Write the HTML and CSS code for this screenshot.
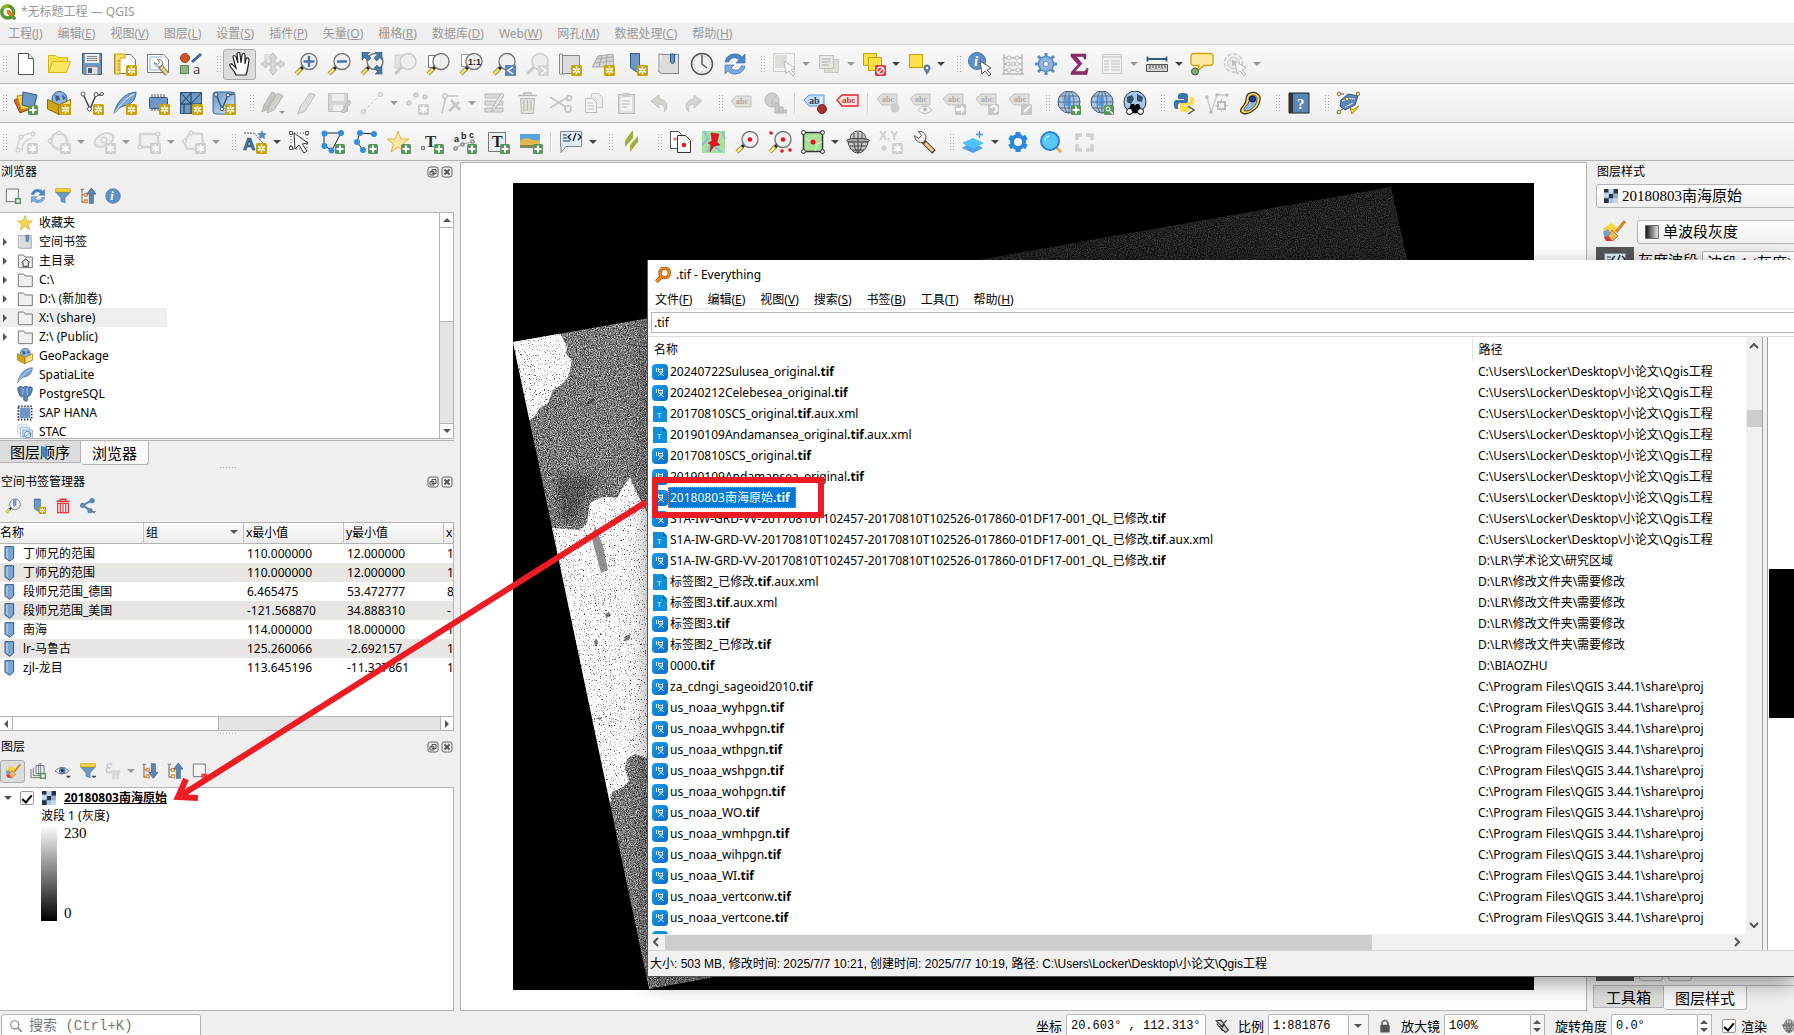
FILE: index.html
```html
<!DOCTYPE html>
<html lang="zh-CN">
<head>
  <meta charset="UTF-8" />
  <meta name="viewport" content="width=device-width, initial-scale=1.0"/>
  <title>*无标题工程 — QGIS</title>
  <link rel="stylesheet" href="styles.css">
</head>
<body>
  <!-- Icon sprite -->
  <svg class="sprite" aria-hidden="true">
    <!-- badges -->
    <symbol id="b-star" viewBox="0 0 24 24"><rect x="13" y="13" width="11" height="11" rx="1.5" fill="#c9a30a"/><path d="M18.5 14.5v8M15 16.5l7 4M22 16.5l-7 4" stroke="#fff" stroke-width="1.5"/><circle cx="18.5" cy="18.5" r="1" fill="#c9a30a"/></symbol>
    <symbol id="b-plus" viewBox="0 0 24 24"><rect x="14" y="14" width="10" height="10" rx="1.5" fill="#5a9560"/><path d="M19 15.5v7M15.500 19h7" stroke="#fff" stroke-width="2"/></symbol>
    <symbol id="b-gray" viewBox="0 0 24 24"><rect x="13" y="13" width="11" height="11" rx="1.5" fill="#cfcfcb"/><path d="M18.5 14.5v8M15 16.5l7 4M22 16.5l-7 4" stroke="#fff" stroke-width="1.5"/></symbol>
    <symbol id="mag" viewBox="0 0 24 24"><path d="M2 22l6-6" stroke="#777" stroke-width="4"/><path d="M2 22l6-6" stroke="#fce94f" stroke-width="2.5"/><path d="M7 17l3-3" stroke="#222" stroke-width="3"/><circle cx="15" cy="9.5" r="8" fill="#eee" fill-opacity=".9" stroke="#777" stroke-width="1.4"/></symbol>
    <symbol id="gmag" viewBox="0 0 24 24"><path d="M2 22l8-8" stroke="#c8c8c8" stroke-width="3"/><circle cx="15" cy="9.5" r="8" fill="#eee" stroke="#ccc" stroke-width="1.4"/></symbol>
    <symbol id="cursor" viewBox="0 0 24 24"><path d="M12 9l2 13 3-3 4 5 2-2-4-4 4-2z" fill="#fff" stroke="#555"/></symbol>
    <symbol id="gcursor" viewBox="0 0 24 24"><path d="M12 9l2 13 3-3 4 5 2-2-4-4 4-2z" fill="#f4f4f4" stroke="#bbb"/></symbol>
    <symbol id="gtag" viewBox="0 0 24 24"><path d="M1 8l5-5h15v11H6z" fill="#dededb" stroke="#c2c2be"/><text x="6" y="11" font-size="8" font-family="Liberation Serif" font-weight="bold" fill="#aaa">abc</text></symbol>

    <!-- row 1 -->
    <symbol id="qgis" viewBox="0 0 24 24"><circle cx="11.5" cy="12" r="9" fill="none" stroke="#589632" stroke-width="5"/><path d="M4 7a9 9 0 0 1 9-4" stroke="#93b023" stroke-width="5" fill="none"/><path d="M12 12l11 11" stroke="#589632" stroke-width="5"/><path d="M10 9h5l5 8-2 2-7-4z" fill="#ee7913"/></symbol>
    <symbol id="new" viewBox="0 0 24 24"><path d="M4.5 1.5h10l5 5v16h-15z" fill="#fff" stroke="#555"/><path d="M14.5 1.5v5h5" fill="#ddd" stroke="#555"/></symbol>
    <symbol id="open" viewBox="0 0 24 24"><path d="M1.5 20.5v-17h7l2 2h10v4" fill="#f7e14d" stroke="#d8b51c"/><path d="M1.5 20.5l4-11h18l-4 11z" fill="#fbe660" stroke="#d8b51c"/></symbol>
    <symbol id="save" viewBox="0 0 24 24"><path d="M2.5 1.5h19v21H4l-1.500-1.5z" fill="#6d97c4" stroke="#415a75"/><path d="M5 2h14v9H5z" fill="#eee"/><path d="M7 4.5h10M7 6.5h10M7 8.5h10" stroke="#888"/><path d="M6 14.5h12v8H6z" fill="#ddd" stroke="#888"/><path d="M8 16h4v5H8z" fill="#415a75"/></symbol>
    <symbol id="layout" viewBox="0 0 24 24"><path d="M1.5 2.5h16l5 5v14h-21z" fill="#fff" stroke="#777"/><path d="M2 2h10v4H7v16H2z" fill="#fce072" stroke="#c4a000"/><path d="M4 9h3M4 12h3M4 15h3M4 18h3" stroke="#c4a000"/><use href="#b-star"/></symbol>
    <symbol id="manager" viewBox="0 0 24 24"><path d="M1.5 2.5h16l5 5v13h-21z" fill="#fff" stroke="#777"/><path d="M4 5h12M4 5v13h12" stroke="#8ab4e0" fill="none"/><path d="M14 14l7 8" stroke="#777" stroke-width="5"/><path d="M15 15l6 7" stroke="#f0d080" stroke-width="3"/><path d="M14.5 14.5c-3 1-6-1-6-4l3 2 2-2-2-3c3-1 6 2 5 5z" fill="#eee" stroke="#777"/></symbol>
    <symbol id="style" viewBox="0 0 24 24"><circle cx="6" cy="6" r="4.5" fill="#d0532c" stroke="#a03a18"/><path d="M13 10l9-8" stroke="#3d6a98" stroke-width="3"/><rect x="1.5" y="13.5" width="8" height="8" fill="#8cb68a" stroke="#5a8a58"/><text x="14" y="22" font-size="13" font-family="Open Sans" fill="#333">a</text></symbol>
    <symbol id="hand" viewBox="0 0 24 24"><path d="M8 23c-1-4-4-6-6-9-1-2 1-3 3-1l3 3-3-11c0-2 2-2 3 0l2 6-1-9c0-2 3-2 3 0l1 9 1-8c0-2 3-2 3 0v9l1-5c1-2 3-1 3 1-1 6-1 10-3 15z" fill="#fff" stroke="#222" stroke-width="1.2"/></symbol>
    <symbol id="pan" viewBox="0 0 24 24"><path d="M12 1l4 5h-2v5h5V8l5 4-5 4v-3h-5v5h2l-4 5-4-5h2v-5H5v3l-5-4 5-4v3h5V6H8z" fill="#d8d8d8" stroke="#bbb"/><path d="M3 2h7v7H3z" fill="#d8d8d4" opacity=".7"/></symbol>
    <symbol id="zoomin" viewBox="0 0 24 24"><use href="#mag"/><path d="M15 4v11M9.500 9.5h11" stroke="#4a75a8" stroke-width="2.5"/></symbol>
    <symbol id="zoomout" viewBox="0 0 24 24"><use href="#mag"/><path d="M10 9.5h10" stroke="#4a75a8" stroke-width="2.5"/></symbol>
    <symbol id="zoomfull" viewBox="0 0 24 24"><use href="#mag"/><path d="M2 0h8L7.500 2.5 11 6 8 9 4.500 5.5 2 8zM22 0h-7l2.500 2.5L14 6l3 3 3-3.500L22 8zM22 22h-7l2.500-2.500L14 16l3-3 3 3 2-2z" fill="#4a78ab" stroke="#34597f" stroke-width=".6"/></symbol>
    <symbol id="zoomsel" viewBox="0 0 24 24"><path d="M2 3h13v13H2z" fill="#e2e2de" stroke="#d0d0cc"/><use href="#gmag"/></symbol>
    <symbol id="zoomlayer" viewBox="0 0 24 24"><path d="M2.5 3.5h12v12h-12z" fill="#fff" stroke="#777"/><use href="#mag"/></symbol>
    <symbol id="zoom11" viewBox="0 0 24 24"><path d="M2.5 2.5h12v12h-12z" fill="#fff" stroke="#999"/><use href="#mag"/><text x="9" y="13" font-size="9" font-weight="bold" font-family="Liberation Sans" fill="#222">1:1</text></symbol>
    <symbol id="zoomlast" viewBox="0 0 24 24"><use href="#mag"/><rect x="13" y="13" width="11" height="11" fill="#5b87b8"/><path d="M21 15l-5 3.5 5 3.5" fill="none" stroke="#fff" stroke-width="1.5"/></symbol>
    <symbol id="zoomnext" viewBox="0 0 24 24"><use href="#gmag"/><rect x="13" y="13" width="11" height="11" fill="#d4d4d4"/><path d="M16 15l5 3.5-5 3.5" fill="none" stroke="#fff" stroke-width="1.5"/></symbol>
    <symbol id="newmap" viewBox="0 0 24 24"><path d="M1.5 2h3v18l2 2h-5z" fill="#eee" stroke="#888"/><path d="M4.5 3.5h17v18h-17z" fill="#ddd" stroke="#888"/><use href="#b-star"/></symbol>
    <symbol id="new3d" viewBox="0 0 24 24"><path d="M1 15L7 4l15-2 1 13z" fill="#d4d4d4" stroke="#aaa"/><path d="M3 11l19-2M5 7l17-2M11 3L8 15M16 3l-1 12" stroke="#aaa" fill="none"/><use href="#b-star"/></symbol>
    <symbol id="newbm" viewBox="0 0 24 24"><path d="M6.5 1.5h9v20l-5-3-4-3z" fill="#6d97c4" stroke="#34597f"/><use href="#b-star"/></symbol>
    <symbol id="book" viewBox="0 0 24 24"><path d="M2 2h4v18H2z" fill="#eee" stroke="#888"/><path d="M5.5 2.5h16v19h-16c-2 0-3.500-1-3.500-3" fill="#dcdcdc" stroke="#888"/><path d="M13.5 2v8l2 2 2-2V2z" fill="#6d97c4" stroke="#34597f"/></symbol>
    <symbol id="clock" viewBox="0 0 24 24"><circle cx="12" cy="12" r="10.5" fill="#f2f2f2" stroke="#555" stroke-width="1.5"/><path d="M12 3v9l5 4" stroke="#555" stroke-width="1.5" fill="none"/><circle cx="12" cy="12" r="8" fill="none" stroke="#6d97c4" stroke-dasharray="1 3"/></symbol>
    <symbol id="refresh" viewBox="0 0 24 24"><path d="M2 10C3 2 14-1 19 5l3-3v9h-9l3-3c-4-4-9-2-10 2z" fill="#4d86c4" stroke="#3568a0" stroke-width=".6"/><path d="M22 14c-1 8-12 11-17 5l-3 3v-9h9l-3 3c4 4 9 2 10-2z" fill="#7cabe0" stroke="#3568a0" stroke-width=".6"/></symbol>
    <symbol id="select" viewBox="0 0 24 24"><rect x="1.5" y="1.5" width="21" height="18" fill="none" stroke="#bbb" stroke-dasharray="2 1"/><rect x="3" y="3" width="12" height="13" fill="#dcdcd8"/><use href="#gcursor"/></symbol>
    <symbol id="selform" viewBox="0 0 24 24"><path d="M7.5 7.5h14v13h-14z" fill="#dcdcd8" stroke="#c8c8c4"/><path d="M2.5 3.5h14v13h-14z" fill="#e8e8e4" stroke="#c0c0bc"/><path d="M5 7h9M5 10h9M5 13h7" stroke="#c0c0bc" stroke-width="1.5"/></symbol>
    <symbol id="deselect" viewBox="0 0 24 24"><path d="M1.5 1.5h13v12h-13z" fill="#fbe04a" stroke="#c4a000"/><path d="M6.5 5.5h13v13h-13z" fill="#fbe04a" stroke="#c4a000"/><rect x="13" y="13" width="11" height="11" rx="1.5" fill="#e6323c"/><circle cx="18.5" cy="18.5" r="3.5" fill="none" stroke="#fff" stroke-width="1.3"/><path d="M16 21l5-5" stroke="#fff" stroke-width="1.3"/></symbol>
    <symbol id="selloc" viewBox="0 0 24 24"><path d="M2.5 2.5h13v13h-13z" fill="#fbe04a" stroke="#c4a000"/><path d="M20 23c-2-4-3.500-5-3.500-7a3.500 3.500 0 0 1 7 0c0 2-1.500 3-3.500 7z" fill="#5b7fa8"/><circle cx="20" cy="16" r="1.2" fill="#fff"/></symbol>
    <symbol id="info" viewBox="0 0 24 24"><circle cx="9" cy="9" r="8.5" fill="#5e8fc7" stroke="#4a78ab"/><text x="6" y="14" font-size="15" font-style="italic" font-weight="bold" font-family="Liberation Serif" fill="#fff">i</text><use href="#cursor"/></symbol>
    <symbol id="abacus" viewBox="0 0 24 24"><path d="M3 2v19M21 2v19M1 22h22M3 6h18M3 12h18M3 18h18" stroke="#b4b4b4" stroke-width="1.3"/><g fill="#eee" stroke="#c0c0c0"><circle cx="8" cy="6" r="2"/><circle cx="16" cy="6" r="2"/><circle cx="7" cy="12" r="2"/><circle cx="12" cy="12" r="2"/><circle cx="16" cy="12" r="2"/><circle cx="8" cy="18" r="2"/><circle cx="17" cy="18" r="2"/></g></symbol>
    <symbol id="gear" viewBox="0 0 24 24"><path d="M12 1v22M1 12h22M4 4l16 16M20 4L4 20" stroke="#5b8cc2" stroke-width="3"/><circle cx="12" cy="12" r="7.5" fill="#8fb4de" stroke="#5b8cc2" stroke-width="1.5"/><circle cx="12" cy="12" r="2.5" fill="#fff" stroke="#5b8cc2"/></symbol>
    <symbol id="sigma" viewBox="0 0 24 24"><path d="M4 2h15v5h-1.500c-.5-2-1.500-2.500-3-2.500H9l6 7-7 8h8c2 0 3-1 3.500-3H21l-1 6H4v-2l7-8-7-8z" fill="#8e2b6e" stroke="#6a1c50" stroke-width=".5"/></symbol>
    <symbol id="table" viewBox="0 0 24 24"><path d="M2.5 2.5h19v19h-19z" fill="#f2f2f2" stroke="#c8c8c8"/><path d="M3 5h18M4 9h5M11 9h9M4 12h5M11 12h9M4 15h5M11 15h9M4 18h5M11 18h9" stroke="#d0d0d0" stroke-width="1.5"/></symbol>
    <symbol id="ruler" viewBox="0 0 24 24"><path d="M2.5 7h19M2.500 4.5v5M21.500 4.5v5" stroke="#34597f" stroke-width="1.8"/><path d="M1.5 12.5h21v7h-21z" fill="#ccc" stroke="#555"/><path d="M5 13v4M8 13v3M11 13v4M14 13v3M17 13v4M20 13v3" stroke="#555"/></symbol>
    <symbol id="bubble" viewBox="0 0 24 24"><path d="M4 1.500h16q3 0 3 3v6q0 3-3 3h-6l-7 6 2-6H4q-3 0-3-3v-6q0-3 3-3z" fill="#fdeaa0" stroke="#c9a30a" stroke-width="1.3"/><circle cx="5" cy="19.5" r="3.5" fill="#7fa87c" stroke="#555"/></symbol>
    <symbol id="action" viewBox="0 0 24 24"><circle cx="10.5" cy="11" r="9" fill="none" stroke="#d0d0d0" stroke-width="2" stroke-dasharray="4 2"/><circle cx="10.5" cy="11" r="6" fill="#e8e8e8" stroke="#ccc"/><path d="M9 8l5 3-5 3z" fill="#bbb"/><use href="#gcursor"/></symbol>

    <!-- row 2 -->
    <symbol id="source" viewBox="0 0 24 24"><path d="M0 9l10-4 6 13-10 4z" fill="#d9662b" stroke="#a04010"/><path d="M3 5l11-2 3 14-10 2z" fill="#fbd540" stroke="#b89000"/><path d="M9 1l14 3-3 13-12-3z" fill="#6d97c4" stroke="#34597f"/><use href="#b-plus"/></symbol>
    <symbol id="gpkg" viewBox="0 0 24 24"><circle cx="12.5" cy="8" r="7.5" fill="#8fb4de" stroke="#34597f"/><path d="M8 4l4 1 1 4-4 1zM15 3l4 4-3 2z" fill="#3b5f88"/><path d="M.5 8.500L12 14v9.500L.5 18z" fill="#d0a712" stroke="#8a6c00"/><path d="M23.5 8.500L12 14v9.500L23.500 18z" fill="#f7dc80" stroke="#8a6c00"/></symbol>
    <symbol id="newgpkg" viewBox="0 0 24 24"><use href="#gpkg"/><use href="#b-star"/></symbol>
    <symbol id="newshp" viewBox="0 0 24 24"><path d="M3 3l7 15 6-14h6" stroke="#444" stroke-width="1.5" fill="none"/><g fill="#fff" stroke="#555"><circle cx="3" cy="3" r="2"/><circle cx="9.5" cy="18" r="2"/><circle cx="16" cy="3.5" r="2"/><circle cx="22" cy="3" r="1.5"/></g><use href="#b-star"/></symbol>
    <symbol id="feather" viewBox="0 0 24 24"><path d="M1 23C3 12 11 2 23 1c0 8-5 13-13 14-3 1-5 3-9 8z" fill="#7ba6d4" stroke="#3a6696"/><path d="M1 23C6 15 13 7 21 3" stroke="#e4f0fa" fill="none"/></symbol>
    <symbol id="newspatia" viewBox="0 0 24 24"><use href="#feather"/><use href="#b-star"/></symbol>
    <symbol id="newmem" viewBox="0 0 24 24"><path d="M6 3v17M9 3v17M12 3v17M15 3v17M18 3v17" stroke="#555"/><rect x="3.5" y="6.5" width="18" height="11" rx="1" fill="#6d97c4" stroke="#34597f"/><use href="#b-star"/></symbol>
    <symbol id="newvirt" viewBox="0 0 24 24"><path d="M1.5 1.5h21v21h-21z" fill="#6d97c4" stroke="#2e4f74"/><path d="M12 2v20M2 13h20M2 2l10 11M12 2L2 13M22 2L12 13M5 13v9" stroke="#1f3b5c" fill="none"/><use href="#b-star"/></symbol>
    <symbol id="newmesh" viewBox="0 0 24 24"><rect x="1" y="1" width="22" height="22" rx="3" fill="url(#g-mesh)" stroke="#3a6696"/><path d="M4 3l6 15 6-14 6-1" stroke="#34597f" stroke-width="1.5" fill="none"/><g fill="#fff" stroke="#34597f"><circle cx="4" cy="3.5" r="1.8"/><circle cx="10" cy="18" r="1.8"/><circle cx="16" cy="4" r="1.8"/></g><use href="#b-star"/></symbol>
    <symbol id="pencils" viewBox="0 0 24 24"><path d="M1 21l2-7L11 1l4 2-8 15z" fill="#c4c4c0" stroke="#b4b4b0"/><path d="M6 22l2-7 9-13 5 3-9 14z" fill="#cfcfcb" stroke="#b4b4b0"/><path d="M18 20h6l-3 3z" fill="#999"/></symbol>
    <symbol id="pencil" viewBox="0 0 24 24"><path d="M4 23l2-7L16 2l5 2-10 16z" fill="#dededb" stroke="#bdbdba"/></symbol>
    <symbol id="gsave" viewBox="0 0 24 24"><path d="M1.5 2.5h19v18h-19z" fill="#d4d4d1" stroke="#c0c0bd"/><path d="M5 3h12v7H5zM6 14h10v6H6z" fill="#eee"/><path d="M14 21l8-12 2 2-7 11z" fill="#ccc" stroke="#bbb"/></symbol>
    <symbol id="gline" viewBox="0 0 24 24"><path d="M4 20L20 4" stroke="#c4c4c4" stroke-dasharray="3 2"/><circle cx="3.5" cy="20.5" r="2" fill="#eee" stroke="#bbb"/><circle cx="20.5" cy="3.5" r="2" fill="#eee" stroke="#bbb"/></symbol>
    <symbol id="gpoints" viewBox="0 0 24 24"><g fill="#ddd" stroke="#bbb"><circle cx="4" cy="12" r="2.2"/><circle cx="11" cy="4" r="2.2"/><circle cx="20" cy="6" r="2.2"/></g><use href="#b-gray"/></symbol>
    <symbol id="gvertex" viewBox="0 0 24 24"><path d="M4 22L8 5h12" stroke="#c4c4c4" stroke-width="1.5" fill="none"/><path d="M11 20l10-9M13 9l9 10" stroke="#c8c8c8" stroke-width="3" fill="none"/><circle cx="7" cy="5" r="2.5" fill="#eee" stroke="#bbb"/></symbol>
    <symbol id="gmulti" viewBox="0 0 24 24"><path d="M2 3h18v4H2zM2 10h18v4H2zM2 17h18v4H2z" fill="#dcdcd9" stroke="#b8b8b5"/><path d="M8 21l2-5L18 2l3 2-9 14z" fill="#e8e8e6" stroke="#b8b8b5"/></symbol>
    <symbol id="gtrash" viewBox="0 0 24 24"><path d="M2 4.500h19M8 4V2h7v2" stroke="#b8b8b5" stroke-width="1.5" fill="none"/><path d="M4.5 7.5h14l-1 15h-12z" fill="#e0e0dd" stroke="#b8b8b5"/><path d="M8 9v11M11.500 9v11M15 9v11" stroke="#b8b8b5"/></symbol>
    <symbol id="gcut" viewBox="0 0 24 24"><path d="M1 6l16 10M1 17L19 6" stroke="#c8c8c5" stroke-width="2"/><circle cx="19" cy="18" r="3" fill="none" stroke="#c0c0bd" stroke-width="1.5"/><circle cx="20" cy="7" r="2.5" fill="none" stroke="#c0c0bd" stroke-width="1.5"/></symbol>
    <symbol id="gcopy" viewBox="0 0 24 24"><path d="M9.5 2.5h7l4 4v10h-11z" fill="#eee" stroke="#ccc"/><path d="M3.5 7.5h7l4 4v10h-11z" fill="#f4f4f4" stroke="#bbb"/><path d="M5.5 12h5M5.500 15h7M5.500 18h7" stroke="#bbb"/></symbol>
    <symbol id="gpaste" viewBox="0 0 24 24"><path d="M3.5 3.5h16v19h-16z" fill="#dededb" stroke="#b8b8b5"/><path d="M6 6h11v14H6z" fill="#f4f4f4"/><path d="M8 2h7v4H8z" fill="#ccc"/><path d="M7 10h8M7 13h8M7 16h5" stroke="#bbb"/></symbol>
    <symbol id="gundo" viewBox="0 0 24 24"><path d="M3 10l8-6v4c7 0 11 8 5 13 2-5-1-8-5-8v4z" fill="#d4d4d1" stroke="#c4c4c1"/></symbol>
    <symbol id="gredo" viewBox="0 0 24 24"><path d="M21 10l-8-6v4C6 8 2 16 8 21c-2-5 1-8 5-8v4z" fill="#d4d4d1" stroke="#c4c4c1"/></symbol>
    <symbol id="glabel" viewBox="0 0 24 24"><use href="#gtag" y="2"/></symbol>
    <symbol id="gdiagram" viewBox="0 0 24 24"><circle cx="9" cy="9" r="7" fill="#cfcfcb" stroke="#b8b8b5"/><path d="M9 9l5-5M9 9v7" stroke="#b8b8b5"/><path d="M12 22V12h4v10zM16 22v-6h4v6zM20 22v-3h4v3z" fill="#c8c8c5" stroke="#b8b8b5"/></symbol>
    <symbol id="labpin" viewBox="0 0 24 24"><path d="M1 9l5-5h15v11H6z" fill="#bcdcf8" stroke="#5b9bd5"/><text x="6" y="13" font-size="10" font-family="Liberation Serif" font-weight="bold" fill="#345">ab</text><path d="M18 6v9" stroke="#fff" stroke-width="2"/><circle cx="19" cy="18" r="4.5" fill="#a83232" stroke="#842020"/></symbol>
    <symbol id="labred" viewBox="0 0 24 24"><path d="M1 9l5-5h16v11H6z" fill="#fde4e4" stroke="#e8202c" stroke-width="1.3"/><text x="6" y="12" font-size="9" font-family="Liberation Serif" font-weight="bold" fill="#c33">abc</text></symbol>
    <symbol id="glabpin" viewBox="0 0 24 24"><use href="#gtag"/><circle cx="19" cy="17" r="4.5" fill="#ccc"/></symbol>
    <symbol id="glabeye" viewBox="0 0 24 24"><use href="#gtag"/><path d="M9 19q7-8 14 0-7 7-14 0z" fill="#f4f4f4" stroke="#bbb"/><circle cx="16" cy="18.5" r="2" fill="#bbb"/></symbol>
    <symbol id="glabmove" viewBox="0 0 24 24"><use href="#gtag"/><rect x="13" y="13" width="11" height="11" rx="1" fill="#c8c8c4"/><path d="M14 17h5v-3l4 4.5-4 4.500v-3h-5z" fill="#fff"/></symbol>
    <symbol id="glabrot" viewBox="0 0 24 24"><use href="#gtag"/><rect x="13" y="13" width="11" height="11" rx="1" fill="#c8c8c4"/><path d="M16 17a3 3 0 1 1 3 4" stroke="#fff" stroke-width="1.8" fill="none"/></symbol>
    <symbol id="glabedit" viewBox="0 0 24 24"><use href="#gtag"/><rect x="13" y="13" width="11" height="11" rx="1" fill="#c8c8c4"/><path d="M16 21l6-6" stroke="#fff" stroke-width="2"/></symbol>
    <symbol id="globe" viewBox="0 0 24 24"><circle cx="12" cy="11" r="11" fill="#a4c4e6" stroke="#4c5a6a"/><g fill="none" stroke="#56667a" stroke-width=".9"><ellipse cx="12" cy="11" rx="5" ry="11"/><path d="M1 11h22M3 5h18M3 17h18M12 0v22"/></g><path d="M8 6h6v9H8z" fill="#3d86d8" opacity=".6"/></symbol>
    <symbol id="globeadd" viewBox="0 0 24 24"><use href="#globe"/><use href="#b-plus"/></symbol>
    <symbol id="globefind" viewBox="0 0 24 24"><use href="#globe"/><rect x="14" y="14" width="10" height="10" rx="1.5" fill="#5a9560"/><circle cx="18" cy="18" r="2" fill="none" stroke="#fff"/><path d="M20 20l3 3" stroke="#fff" stroke-width="1.5"/></symbol>
    <symbol id="globebin" viewBox="0 0 24 24"><circle cx="12" cy="11" r="11" fill="#a8c8e8" stroke="#333"/><path d="M4 6l5-2 2 4-3 5-4-2zM14 3l6 3-1 5-5-1z" fill="#2f4f74"/><path d="M4 22l4-9h3l1 2 1-2h3l4 9z" fill="#000"/><circle cx="6.5" cy="20.5" r="3" fill="#fff" stroke="#000"/><circle cx="17.5" cy="20.5" r="3" fill="#fff" stroke="#000"/></symbol>
    <symbol id="python" viewBox="0 0 24 24"><path d="M11 2c-4 0-5 1-5 3v3h6v1H4c-3 0-3 9 0 9h2v-3c0-2 1-3 3-3h5c2 0 2-1 2-2V5c0-2-1-3-5-3z" fill="#3f74a8"/><path d="M13 21c4 0 5-1 5-3v-3h-6v-1h8c3 0 3-8 0-8h-2v3c0 2-1 3-3 3h-5c-2 0-2 1-2 2v4c0 2 1 3 5 3z" fill="#fbdc4a"/><path d="M16 15l6 4-6 4" stroke="#555" fill="none" stroke-width="1.5"/></symbol>
    <symbol id="gproc" viewBox="0 0 24 24"><path d="M2 6l4 15L12 4h11" stroke="#ccc" stroke-width="1.5" fill="none"/><g fill="#bbb"><circle cx="2" cy="6" r="1.8"/><circle cx="6" cy="21" r="1.8"/><circle cx="12" cy="4" r="1.8"/><circle cx="22" cy="4" r="1.8"/></g><rect x="13" y="11" width="7" height="7" fill="#eee" stroke="#bbb" stroke-width="2"/><path d="M16.5 8v3M16.500 18v3M10 14.500h3M20 14.500h3" stroke="#bbb"/></symbol>
    <symbol id="swirl" viewBox="0 0 24 24"><path d="M10 3C16-1 23 3 22 9c-1 7-5 10-9 12-5 3-12 2-10-3 2-4 5-5 5-9 0-3 0-4 2-6z" fill="#fbe04a" stroke="#333" stroke-width="1.3"/><path d="M12 5c4-2 8 0 7 4-1 6-4 8-7 10-4 2-7 1-6-1 1-3 5-5 5-8 0-3 0-4 1-5z" fill="#8fb4de" stroke="#555"/><circle cx="14.5" cy="8" r="3" fill="#2040a0" stroke="#113"/></symbol>
    <symbol id="help" viewBox="0 0 24 24"><path d="M2 2h20v20H2z" fill="#5b87b8" stroke="#222"/><path d="M2 2h4v20H2z" fill="#333"/><text x="10" y="18" font-size="15" font-family="Liberation Serif" font-weight="bold" fill="#fff">?</text></symbol>
    <symbol id="polyedit" viewBox="0 0 24 24"><path d="M3 3h5M3 21l6-5M22 3l-3 4" stroke="#444" fill="none"/><path d="M5 9l7-6 10 2-3 9-10 5-5-4z" fill="#5b87b8" stroke="#34597f"/><path d="M6 10q7-4 13-2M17 12l-8 4" stroke="#dde6f0" fill="none"/><g fill="#fbe04a" stroke="#777"><circle cx="3" cy="3" r="1.8"/><circle cx="3" cy="21" r="1.8"/><circle cx="11" cy="8" r="1.8"/><circle cx="22" cy="3" r="1.8"/></g><path d="M14 17l2 6 7-8-6 4z" fill="#fbe04a" stroke="#a80"/></symbol>

    <!-- row 3 -->
    <symbol id="garc" viewBox="0 0 24 24"><path d="M3 20C3 10 8 3 20 3M8 20c0-6 3-10 10-12" stroke="#d4d4d4" stroke-width="1.5" fill="none"/><g fill="#eee" stroke="#c8c8c8"><circle cx="4" cy="20" r="2"/><circle cx="7" cy="7" r="2"/><circle cx="19" cy="4" r="2"/></g><use href="#b-gray"/></symbol>
    <symbol id="gcircle" viewBox="0 0 24 24"><circle cx="12" cy="11" r="8" fill="#f0f0ee" stroke="#d4d4d4" stroke-width="2.5"/><g fill="#eee" stroke="#c8c8c8"><circle cx="12" cy="3" r="2"/><circle cx="3" cy="11" r="2"/></g><use href="#b-gray"/></symbol>
    <symbol id="gellipse" viewBox="0 0 24 24"><ellipse cx="12" cy="10" rx="10" ry="6" transform="rotate(-25 12 10)" fill="#f0f0ee" stroke="#d4d4d4" stroke-width="2"/><circle cx="12" cy="10" r="3" fill="#eee" stroke="#c8c8c8"/><use href="#b-gray"/></symbol>
    <symbol id="grect" viewBox="0 0 24 24"><path d="M3 4h18v13H3z" fill="#f0f0ee" stroke="#d4d4d4" stroke-width="2.5"/><g fill="#eee" stroke="#c8c8c8"><circle cx="3" cy="17" r="2"/><circle cx="21" cy="4" r="2"/></g><use href="#b-gray"/></symbol>
    <symbol id="gpoly" viewBox="0 0 24 24"><path d="M2 12L8 3l12 1 1 9-8 6H5z" fill="#f0f0ee" stroke="#d4d4d4" stroke-width="2.2"/><g fill="#eee" stroke="#c8c8c8"><circle cx="2.5" cy="11" r="2"/><circle cx="9" cy="3" r="2"/></g><use href="#b-gray"/></symbol>
    <symbol id="annot" viewBox="0 0 24 24"><path d="M1 3h10l9 10" stroke="#555" stroke-dasharray="2 1" fill="none"/><path d="M19 0l1.500 3 3.500.5-2.500 2 .5 3.500-3-1.500-3 1.500.5-3.500-2.500-2 3.500-.5z" fill="#5b87b8"/><text x="0" y="20" font-size="17" font-weight="bold" font-family="Liberation Sans" fill="#4a78ab" stroke="#27425f" stroke-width=".7">A</text><use href="#b-star"/></symbol>
    <symbol id="annsel" viewBox="0 0 24 24"><path d="M3 3h16v16H3z" fill="none" stroke="#444" stroke-dasharray="1 2"/><path d="M1.5 1.5h3v3h-3zM17.500 1.5h3v3h-3zM1.500 16.5h3v3h-3z" fill="#fff" stroke="#555"/><path d="M6 3l1 16 4-4 5 8 3-2-5-7 6-1z" fill="#fff" stroke="#333"/></symbol>
    <symbol id="annpoly" viewBox="0 0 24 24"><path d="M3 3h17L11 20 3 16z" fill="#eee" stroke="#222"/><g fill="#338ce0"><circle cx="3.5" cy="3.5" r="3"/><circle cx="20" cy="3" r="3"/><circle cx="3.5" cy="16" r="3"/><circle cx="10.5" cy="20.5" r="3"/></g><use href="#b-plus"/></symbol>
    <symbol id="annline" viewBox="0 0 24 24"><path d="M20 4L6 3 3 12l6 8" fill="none" stroke="#222"/><g fill="#338ce0"><circle cx="6" cy="3" r="3"/><circle cx="20" cy="4" r="3"/><circle cx="3" cy="12" r="3"/><circle cx="9" cy="20" r="3"/></g><use href="#b-plus"/></symbol>
    <symbol id="star" viewBox="0 0 24 24"><path d="M12 1l3 8h8l-6.500 5 2.500 8-7-5-7 5 2.500-8L1 9h8z" fill="#fbd94a" stroke="#c69a14"/></symbol>
    <symbol id="annstar" viewBox="0 0 24 24"><path d="M11 1l3 8h8l-6.500 5 2.500 8-7-5-7 5 2.500-8L0 9h8z" fill="#fde6a0" stroke="#e0b040"/><use href="#b-plus"/></symbol>
    <symbol id="anntext" viewBox="0 0 24 24"><text x="5" y="17" font-size="17" font-weight="bold" font-family="Liberation Serif" fill="#333">T</text><path d="M1.5 16.5h3v3h-3z" fill="#ccc" stroke="#777"/><use href="#b-plus"/></symbol>
    <symbol id="anncurve" viewBox="0 0 24 24"><path d="M2 19L8 15l6-2 8-1" stroke="#999" fill="none"/><text x="1" y="12" font-size="9" font-weight="bold" font-family="Liberation Sans" fill="#222">a</text><text x="8" y="9" font-size="9" font-weight="bold" font-family="Liberation Sans" fill="#222">b</text><text x="16" y="8" font-size="9" font-weight="bold" font-family="Liberation Sans" fill="#222">c</text><path d="M1 17h3v3H1zM8 13h3v3H8zM18 10h3v3h-3z" fill="#ddd" stroke="#777"/><use href="#b-plus"/></symbol>
    <symbol id="annbox" viewBox="0 0 24 24"><path d="M2.5 2.5h17v19h-17z" fill="#e8eef0" stroke="#777"/><text x="6" y="17" font-size="16" font-weight="bold" font-family="Liberation Serif" fill="#222">T</text><use href="#b-plus"/></symbol>
    <symbol id="annpic" viewBox="0 0 24 24"><path d="M1 4h20v14H1z" fill="#5aa5e0"/><path d="M1 11q5-5 10-2 5 2 10 1v8H1z" fill="#e0b850"/><path d="M1 15h20v3H1z" fill="#7c8c50"/><use href="#b-plus"/></symbol>
    <symbol id="anncode" viewBox="0 0 24 24"><path d="M1.5 1.5h21v15H7l-5 6v-6h-.5z" fill="#e0ecf4" stroke="#888"/><path d="M4 5h4M4 8h4M4 11h7" stroke="#4a78ab" stroke-width="1.5"/><path d="M12 4L9 7l3 3M19 4l3 3-3 3M17 3l-3 8" stroke="#222" stroke-width="1.3" fill="none"/></symbol>
    <symbol id="slashes" viewBox="0 0 24 24"><path d="M12 1L5 11v6l8-9V1zM18 6l-8 9v7l8-10z" fill="#a3ae36"/></symbol>
    <symbol id="pages" viewBox="0 0 24 24"><path d="M1.5 1.5h8l3 3v14h-11z" fill="#fff" stroke="#555"/><path d="M8.5 5.5h8l5 5v12h-13z" fill="#fff" stroke="#333"/><circle cx="6" cy="9" r="1.8" fill="#f08080"/><circle cx="15" cy="15" r="2.2" fill="#f0101c"/></symbol>
    <symbol id="pinmap" viewBox="0 0 24 24"><path d="M0 1h23v22H0z" fill="#a8e0a0"/><path d="M2 1l4 8-6 6M20 1l3 8M5 22l5-8 9 8" stroke="#88b8e8" stroke-width="2" fill="none"/><path d="M9 3l8 1-2 8 3 3-6 1-4 6 1-7-3-2 4-2z" fill="#f0101c" stroke="#a00c14" stroke-width=".5"/></symbol>
    <symbol id="magdot" viewBox="0 0 24 24"><use href="#mag"/><circle cx="15" cy="9.5" r="2.3" fill="#f0101c"/></symbol>
    <symbol id="magdots" viewBox="0 0 24 24"><use href="#mag"/><g fill="#f0101c"><circle cx="15" cy="9.5" r="2.3"/><circle cx="3" cy="3" r="1.8"/><circle cx="14" cy="21" r="1.8"/><circle cx="22" cy="20" r="1.8"/></g></symbol>
    <symbol id="bbox" viewBox="0 0 24 24"><path d="M2.5 2.5h19v19h-19z" fill="#a8e098" stroke="#333" stroke-width="1.5"/><path d="M4 8l6 4 4-8M14 21l2-7 5-2" stroke="#d4f0cc" fill="none"/><circle cx="12" cy="12" r="2.5" fill="#f0101c"/><g fill="#fff" stroke="#333"><circle cx="2.5" cy="2.5" r="2"/><circle cx="21.5" cy="2.5" r="2"/><circle cx="2.5" cy="21.5" r="2"/><circle cx="21.5" cy="21.5" r="2"/></g></symbol>
    <symbol id="dome" viewBox="0 0 24 24"><path d="M4 9a8 8 0 0 1 16 0z" fill="#ccc" stroke="#555"/><ellipse cx="12" cy="10.5" rx="11.5" ry="2" fill="#aaa" stroke="#444"/><path d="M2 12c1 6 5 11 10 11s9-5 10-11z" fill="#c4c4c4" stroke="#444"/><path d="M8 12c0 5 2 9 4 11 2-2 4-6 4-11M12 2v21M4 16h16M8 3v6M16 3v6M6 20h12" stroke="#444" fill="none"/></symbol>
    <symbol id="gxy" viewBox="0 0 24 24"><text x="0" y="10" font-size="12" font-weight="bold" font-family="Liberation Sans" fill="#d0d0d0">X,Y</text><circle cx="5" cy="18" r="2.5" fill="#ccc"/><use href="#b-gray"/></symbol>
    <symbol id="wrench" viewBox="0 0 24 24"><path d="M11 11l11 11" stroke="#444" stroke-width="5"/><path d="M13 13l8 8" stroke="#f3cf80" stroke-width="3"/><path d="M11.5 12.5c-4 1-9-2-9-7l4 3 3-3-3-4c5-1 9 4 7 8z" fill="#eee" stroke="#555"/></symbol>
    <symbol id="layerplus" viewBox="0 0 24 24"><path d="M1 18l5-3 6 3 5-3 5 3-10 5z" fill="#4da0ea"/><path d="M12 8l11 5-11 6-11-6z" fill="#4cc4f2"/><path d="M18.5 1v7M15 4.500h7" stroke="#4a90e0" stroke-width="1.5"/></symbol>
    <symbol id="bluegear" viewBox="0 0 24 24"><path d="M12 2v20M3.500 7l17 10M20.500 7l-17 10" stroke="#2b88dd" stroke-width="5"/><circle cx="12" cy="12" r="6" fill="none" stroke="#2b88dd" stroke-width="4"/><circle cx="12" cy="12" r="4" fill="#f6f6f6"/></symbol>
    <symbol id="bluemag" viewBox="0 0 24 24"><path d="M17 17l5 5" stroke="#f0a050" stroke-width="2.5"/><circle cx="11" cy="11" r="9" fill="#58c8f8" stroke="#2b80d0" stroke-width="2"/><path d="M6 11a5 5 0 0 1 4-5" stroke="#fff" fill="none"/></symbol>
    <symbol id="gfocus" viewBox="0 0 24 24"><path d="M5 10V5h5M14 5h6v5M20 14v6h-6M10 20H5v-6" fill="none" stroke="#d0d0d0" stroke-width="3.5"/></symbol>

    <!-- panels -->
    <symbol id="p-add" viewBox="0 0 24 24"><path d="M2 1.500h18v19H2z" fill="#f4f4f4" stroke="#777" stroke-width="1.5"/><rect x="16" y="16" width="7" height="7" fill="#fff" stroke="#5a9560" stroke-width="2.5"/></symbol>
    <symbol id="p-remove" viewBox="0 0 24 24"><path d="M2 1.500h18v19H2z" fill="#f4f4f4" stroke="#777" stroke-width="1.5"/><rect x="14" y="16" width="9" height="6" fill="#e84040"/></symbol>
    <symbol id="p-filter" viewBox="0 0 24 24"><path d="M1 6h22l-8 9v7l-6-2v-5z" fill="#6d97c4" stroke="#4a78ab"/><path d="M1 1h22v5H1z" fill="#fbd540" stroke="#c4a000"/></symbol>
    <symbol id="p-filterdd" viewBox="0 0 24 24"><use href="#p-filter"/><path d="M17 19h8l-4 4z" fill="#444"/></symbol>
    <symbol id="p-collapse" viewBox="0 0 24 24"><path d="M1 2h5M3 2v19h6M3 10h6" stroke="#888" stroke-width="2" fill="none"/><path d="M7 8h4v4H7zM7 18h4v4H7z" fill="#fff" stroke="#f09030" stroke-width="2"/><path d="M17 0l7 9h-4v14h-6V9h-4z" fill="#5b87b8" stroke="#34597f"/></symbol>
    <symbol id="p-expand" viewBox="0 0 24 24"><path d="M1 2h5M3 2v19h6M3 10h6" stroke="#888" stroke-width="2" fill="none"/><path d="M7 8h4v4H7zM7 18h4v4H7z" fill="#fff" stroke="#f09030" stroke-width="2"/><path d="M17 23l7-9h-4V1h-6v13h-4z" fill="#5b87b8" stroke="#34597f"/></symbol>
    <symbol id="p-info" viewBox="0 0 24 24"><circle cx="12" cy="12" r="11" fill="#5e8fc7" stroke="#4a78ab"/><text x="8" y="18" font-size="18" font-style="italic" font-weight="bold" font-family="Liberation Serif" fill="#fff">i</text></symbol>
    <symbol id="folder" viewBox="0 0 24 24"><path d="M2 22V3h8l2 3h11v16z" fill="#efefef" stroke="#7a7a7a" stroke-width="1.5"/></symbol>
    <symbol id="home" viewBox="0 0 24 24"><use href="#folder"/><path d="M7 14l6-5 6 5M9 14v6h8v-6" fill="none" stroke="#333" stroke-width="1.5"/></symbol>
    <symbol id="elephant" viewBox="0 0 24 24"><path d="M1 4c0-4 7-4 8-2 3-2 6-2 8 0 4-2 7 0 6 4s-3 8-4 9c-2 1-2 0-3 0 0 4 0 8-2 8s-4-1-4-3v-6c-3 4-6 2-6 0C3 11 1 8 1 4z" fill="#5b87b8" stroke="#2e4f74"/><path d="M8 3c2 3 1 8 0 10M16 3c-2 3-1 7 0 11" stroke="#cfe0f0" fill="none"/></symbol>
    <symbol id="hana" viewBox="0 0 24 24"><rect x="2" y="2" width="20" height="20" fill="none" stroke="#222" stroke-width="2.5" stroke-dasharray="2 2.5"/><rect x="4" y="4" width="16" height="16" fill="#6d97c4"/></symbol>
    <symbol id="stac" viewBox="0 0 24 24"><path d="M1 1h14v14H1z" fill="#eef4fa" stroke="#b8cce0"/><path d="M5 5h14v14H5z" fill="#dce8f4" stroke="#8aaccc"/><path d="M9 9h14v14H9z" fill="#e8f0f8" stroke="#5b87b8"/><circle cx="16" cy="16" r="5" fill="none" stroke="#5b87b8" stroke-width="1.5"/><path d="M12 19l8-6" stroke="#5b87b8"/></symbol>
    <symbol id="bm" viewBox="0 0 24 24"><path d="M6 1h13v17l-6 5-7-5z" fill="#7ba6d4" stroke="#34597f" stroke-width="1.5"/><path d="M9 3v15" stroke="#b8d0ea" stroke-width="2"/></symbol>
    <symbol id="bmzoom" viewBox="0 0 24 24"><use href="#mag"/><path d="M12 2h5v9l-2.500 2L12 11z" fill="#6d97c4"/></symbol>
    <symbol id="trash" viewBox="0 0 24 24"><path d="M2 5h20M8 5V2h8v3" stroke="#f0303c" stroke-width="2.2" fill="none"/><path d="M4 8h16v14H4z" fill="#fff" stroke="#f0303c" stroke-width="2"/><path d="M8 9v12M12 9v12M16 9v12" stroke="#f0303c" stroke-width="1.8"/></symbol>
    <symbol id="share" viewBox="0 0 24 24"><path d="M17 4L4 11l12 8" stroke="#5b87b8" stroke-width="3" fill="none"/><g fill="#5b87b8"><circle cx="18" cy="4" r="4"/><circle cx="4" cy="11" r="4"/><circle cx="15" cy="19" r="4"/></g><path d="M17 20h7l-3 3z" fill="#555"/></symbol>
    <symbol id="brush" viewBox="0 0 24 24"><path d="M1 10l8-6 6 4-3 10-9 2z" fill="#fbd540"/><path d="M1 13l5-3 4 8-7 2z" fill="#6d9fd8"/><path d="M2 18l5-1 5 5H4z" fill="#e8303c"/><path d="M10 11l6 6-6 5-4-5z" fill="#f0b860" stroke="#b07820"/><path d="M14 13L23 2" stroke="#d08828" stroke-width="3"/></symbol>
    <symbol id="group" viewBox="0 0 24 24"><path d="M1.5 9v13H16M5 7v12h14M9 4h12v12H9z" fill="none" stroke="#777" stroke-width="1.5"/><path d="M13 18V2l3-2v18" stroke="#456" fill="none"/><rect x="16" y="16" width="7" height="7" fill="#fff" stroke="#5a9560" stroke-width="2.5"/></symbol>
    <symbol id="eye" viewBox="0 0 24 24"><path d="M0 12Q11 1 21 12 11 21 0 12z" fill="#f4f4f4" stroke="#777" stroke-width="1.5"/><circle cx="11" cy="11.5" r="5" fill="#5b87b8"/><circle cx="11" cy="11.5" r="2" fill="#222"/><path d="M16 19h8l-4 4z" fill="#444"/></symbol>
    <symbol id="geps" viewBox="0 0 24 24"><path d="M11 3C7-1 1 2 4 6c1 2 4 1 4 1S2 7 2 11c0 5 7 4 9 1" stroke="#c4c4c4" stroke-width="2" fill="none"/><path d="M10 11h13v4l-2 3v6h-4v-6h-2v6h-4v-8z" fill="#d8d8d8"/></symbol>
    <symbol id="raster" viewBox="0 0 24 24"><path d="M0 0h24v24H0z" fill="#a9c6e4"/><path d="M0 0h8v6H0zM16 0h8v8h-8zM8 8h8v8H8zM0 16h8v8H0z" fill="#2c3440"/><path d="M8 0h8v8H8zM0 8h8v6H0zM16 16h8v8h-8z" fill="#c4d9ee"/><path d="M16 8h8v8h-8z" fill="#92b2d4"/></symbol>
    <symbol id="ramp" viewBox="0 0 24 24"><path d="M1 1h22v22H1z" fill="url(#g-gray)" stroke="#555" stroke-width="1.5"/></symbol>
    <symbol id="float" viewBox="0 0 24 24"><rect x="2" y="2" width="20" height="20" rx="4" fill="none" stroke="#666" stroke-width="2"/><path d="M10 7h8v8h-8zM6 11h8v7H6z" fill="#efefef" stroke="#555" stroke-width="2"/></symbol>
    <symbol id="close" viewBox="0 0 24 24"><rect x="2" y="2" width="20" height="20" rx="4" fill="none" stroke="#666" stroke-width="2"/><path d="M7 7l10 10M17 7L7 17" stroke="#555" stroke-width="4"/></symbol>
    <symbol id="search" viewBox="0 0 24 24"><circle cx="10" cy="10" r="7" fill="none" stroke="#888" stroke-width="2"/><path d="M15 15l7 7" stroke="#888" stroke-width="3"/></symbol>
    <symbol id="evt" viewBox="0 0 24 24"><path d="M10 14l-8 8" stroke="#9c4a08" stroke-width="6"/><circle cx="14.5" cy="9" r="7" fill="none" stroke="#9c4a08" stroke-width="5"/><path d="M10 14l-7.500 7.500" stroke="#f88c1c" stroke-width="4"/><circle cx="14.5" cy="9" r="7" fill="none" stroke="#f88c1c" stroke-width="3"/></symbol>
    <symbol id="f-tif" viewBox="0 0 16 16"><rect width="16" height="16" rx="4" fill="url(#g-blue)"/><path d="M4.5 4v4M6.500 4v4M7 5.500h4M10.500 4v4M7 8h4M6 12l5-4M7 8l5 4" stroke="#e4f2fc" fill="none" stroke-width=".9"/></symbol>
    <symbol id="f-xml" viewBox="0 0 16 16"><path d="M1 0h10l4 4v12H1z" fill="#0e8fdc"/><path d="M11 0l4 4h-4z" fill="#0868b8"/><text x="5" y="12" font-size="8" font-family="Open Sans" fill="#fff">T</text></symbol>
    <symbol id="satellite" viewBox="0 0 24 24"><path d="M2 3l8-1 6 7-3 5zM8 14l8-4 7 9-5 4zM3 8l10 12M20 2l-7 8" fill="#ccc" stroke="#333" stroke-width="1.8"/></symbol>
    <symbol id="lock" viewBox="0 0 24 24"><path d="M7 11V6q5-7 10 0v5" fill="none" stroke="#777" stroke-width="3"/><rect x="4" y="10" width="16" height="13" rx="1" fill="#555"/></symbol>
  </svg>

  <header class="titlebar"><svg class="i16"><use href="#qgis"/></svg><span>*无标题工程 — QGIS</span></header>
  <nav class="menubar">
    <a href="#">工程(<u>J</u>)</a><a href="#">编辑(<u>E</u>)</a><a href="#">视图(<u>V</u>)</a><a href="#">图层(<u>L</u>)</a><a href="#">设置(<u>S</u>)</a><a href="#">插件(<u>P</u>)</a><a href="#">矢量(<u>O</u>)</a><a href="#">栅格(<u>R</u>)</a><a href="#">数据库(<u>D</u>)</a><a href="#">Web(<u>W</u>)</a><a href="#">网孔(<u>M</u>)</a><a href="#">数据处理(<u>C</u>)</a><a href="#">帮助(<u>H</u>)</a>
  </nav>

  <!-- Toolbars -->
  <div class="toolbar">
    <div class="group">
      <button class="tb" aria-label="新建"><svg><use href="#new"/></svg></button>
      <button class="tb" aria-label="打开"><svg><use href="#open"/></svg></button>
      <button class="tb" aria-label="保存"><svg><use href="#save"/></svg></button>
      <button class="tb" aria-label="新建布局"><svg><use href="#layout"/></svg></button>
      <button class="tb" aria-label="布局管理"><svg><use href="#manager"/></svg></button>
      <button class="tb" aria-label="样式管理"><svg><use href="#style"/></svg></button>
    </div>
    <div class="group">
      <button class="tb on" aria-label="平移"><svg><use href="#hand"/></svg></button>
      <button class="tb" aria-label="平移到选中"><svg><use href="#pan"/></svg></button>
      <button class="tb" aria-label="放大"><svg><use href="#zoomin"/></svg></button>
      <button class="tb" aria-label="缩小"><svg><use href="#zoomout"/></svg></button>
      <button class="tb" aria-label="全图"><svg><use href="#zoomfull"/></svg></button>
      <button class="tb" aria-label="缩放到选中"><svg><use href="#zoomsel"/></svg></button>
      <button class="tb" aria-label="缩放到图层"><svg><use href="#zoomlayer"/></svg></button>
      <button class="tb" aria-label="原始分辨率"><svg><use href="#zoom11"/></svg></button>
      <button class="tb" aria-label="上一视图"><svg><use href="#zoomlast"/></svg></button>
      <button class="tb" aria-label="下一视图"><svg><use href="#zoomnext"/></svg></button>
      <button class="tb" aria-label="新建地图"><svg><use href="#newmap"/></svg></button>
      <button class="tb" aria-label="新建三维"><svg><use href="#new3d"/></svg></button>
      <button class="tb" aria-label="新建书签"><svg><use href="#newbm"/></svg></button>
      <button class="tb" aria-label="显示书签"><svg><use href="#book"/></svg></button>
      <button class="tb" aria-label="时态控制"><svg><use href="#clock"/></svg></button>
      <button class="tb" aria-label="刷新"><svg><use href="#refresh"/></svg></button>
    </div>
    <div class="group">
      <button class="tb" aria-label="选择"><svg><use href="#select"/></svg></button><button class="dd off" aria-label="更多"></button>
      <button class="tb" aria-label="按值选择"><svg><use href="#selform"/></svg></button><button class="dd off" aria-label="更多"></button>
      <button class="tb" aria-label="取消选择"><svg><use href="#deselect"/></svg></button><button class="dd" aria-label="更多"></button>
      <button class="tb" aria-label="按位置选择"><svg><use href="#selloc"/></svg></button><button class="dd" aria-label="更多"></button>
    </div>
    <div class="group">
      <button class="tb" aria-label="识别"><svg><use href="#info"/></svg></button>
      <button class="tb" aria-label="字段计算器"><svg><use href="#abacus"/></svg></button>
      <button class="tb" aria-label="工具箱"><svg><use href="#gear"/></svg></button>
      <button class="tb" aria-label="统计"><svg><use href="#sigma"/></svg></button>
      <button class="tb" aria-label="属性表"><svg><use href="#table"/></svg></button><button class="dd off" aria-label="更多"></button>
      <button class="tb" aria-label="测量"><svg><use href="#ruler"/></svg></button><button class="dd" aria-label="更多"></button>
      <button class="tb" aria-label="地图提示"><svg><use href="#bubble"/></svg></button>
      <button class="tb" aria-label="动作"><svg><use href="#action"/></svg></button><button class="dd off" aria-label="更多"></button>
    </div>
  </div>
  <div class="toolbar">
    <div class="group">
      <button class="tb" aria-label="数据源"><svg><use href="#source"/></svg></button>
      <button class="tb" aria-label="新建 GeoPackage"><svg><use href="#newgpkg"/></svg></button>
      <button class="tb" aria-label="新建 Shapefile"><svg><use href="#newshp"/></svg></button>
      <button class="tb" aria-label="新建 SpatiaLite"><svg><use href="#newspatia"/></svg></button>
      <button class="tb" aria-label="新建临时图层"><svg><use href="#newmem"/></svg></button>
      <button class="tb" aria-label="新建虚拟图层"><svg><use href="#newvirt"/></svg></button>
      <button class="tb" aria-label="新建网孔"><svg><use href="#newmesh"/></svg></button>
    </div>
    <div class="group">
      <button class="tb" aria-label="当前编辑"><svg><use href="#pencils"/></svg></button>
      <button class="tb" aria-label="切换编辑"><svg><use href="#pencil"/></svg></button>
      <button class="tb" aria-label="保存编辑"><svg><use href="#gsave"/></svg></button>
      <button class="tb" aria-label="数字化"><svg><use href="#gline"/></svg></button><button class="dd off" aria-label="更多"></button>
      <button class="tb" aria-label="添加要素"><svg><use href="#gpoints"/></svg></button>
      <button class="tb" aria-label="顶点工具"><svg><use href="#gvertex"/></svg></button><button class="dd off" aria-label="更多"></button>
      <button class="tb" aria-label="批量修改"><svg><use href="#gmulti"/></svg></button>
      <button class="tb" aria-label="删除"><svg><use href="#gtrash"/></svg></button>
      <button class="tb" aria-label="剪切"><svg><use href="#gcut"/></svg></button>
      <button class="tb" aria-label="复制"><svg><use href="#gcopy"/></svg></button>
      <button class="tb" aria-label="粘贴"><svg><use href="#gpaste"/></svg></button>
      <button class="tb" aria-label="撤销"><svg><use href="#gundo"/></svg></button>
      <button class="tb" aria-label="重做"><svg><use href="#gredo"/></svg></button>
    </div>
    <div class="group">
      <button class="tb" aria-label="标注"><svg><use href="#glabel"/></svg></button>
      <button class="tb" aria-label="图表"><svg><use href="#gdiagram"/></svg></button>
      <i class="sep"></i>
      <button class="tb" aria-label="高亮标注"><svg><use href="#labpin"/></svg></button>
      <button class="tb" aria-label="未放置标注"><svg><use href="#labred"/></svg></button>
      <i class="sep"></i>
      <button class="tb" aria-label="固定标注"><svg><use href="#glabpin"/></svg></button>
      <button class="tb" aria-label="显示标注"><svg><use href="#glabeye"/></svg></button>
      <button class="tb" aria-label="移动标注"><svg><use href="#glabmove"/></svg></button>
      <button class="tb" aria-label="旋转标注"><svg><use href="#glabrot"/></svg></button>
      <button class="tb" aria-label="修改标注"><svg><use href="#glabedit"/></svg></button>
    </div>
    <div class="group">
      <button class="tb" aria-label="添加服务"><svg><use href="#globeadd"/></svg></button>
      <button class="tb" aria-label="搜索服务"><svg><use href="#globefind"/></svg></button>
      <button class="tb" aria-label="元数据搜索"><svg><use href="#globebin"/></svg></button>
    </div>
    <div class="group">
      <button class="tb" aria-label="Python"><svg><use href="#python"/></svg></button>
      <button class="tb" aria-label="就地处理"><svg><use href="#gproc"/></svg></button>
      <button class="tb" aria-label="等值线"><svg><use href="#swirl"/></svg></button>
    </div>
    <div class="group">
      <button class="tb" aria-label="帮助"><svg><use href="#help"/></svg></button>
    </div>
    <div class="group">
      <button class="tb" aria-label="拓扑"><svg><use href="#polyedit"/></svg></button>
    </div>
  </div>
  <div class="toolbar last">
    <div class="group">
      <button class="tb" aria-label="圆弧"><svg><use href="#garc"/></svg></button>
      <button class="tb" aria-label="圆"><svg><use href="#gcircle"/></svg></button><button class="dd off" aria-label="更多"></button>
      <button class="tb" aria-label="椭圆"><svg><use href="#gellipse"/></svg></button><button class="dd off" aria-label="更多"></button>
      <button class="tb" aria-label="矩形"><svg><use href="#grect"/></svg></button><button class="dd off" aria-label="更多"></button>
      <button class="tb" aria-label="多边形"><svg><use href="#gpoly"/></svg></button><button class="dd off" aria-label="更多"></button>
    </div>
    <div class="group">
      <button class="tb" aria-label="注记图层"><svg><use href="#annot"/></svg></button><button class="dd" aria-label="更多"></button>
      <button class="tb" aria-label="选择注记"><svg><use href="#annsel"/></svg></button>
      <button class="tb" aria-label="面注记"><svg><use href="#annpoly"/></svg></button>
      <button class="tb" aria-label="线注记"><svg><use href="#annline"/></svg></button>
      <button class="tb" aria-label="点注记"><svg><use href="#annstar"/></svg></button>
      <button class="tb" aria-label="文本注记"><svg><use href="#anntext"/></svg></button>
      <button class="tb" aria-label="沿线文本"><svg><use href="#anncurve"/></svg></button>
      <button class="tb" aria-label="文本框"><svg><use href="#annbox"/></svg></button>
      <button class="tb" aria-label="图片注记"><svg><use href="#annpic"/></svg></button>
      <i class="sep"></i>
      <button class="tb" aria-label="HTML 注记"><svg><use href="#anncode"/></svg></button><button class="dd" aria-label="更多"></button>
    </div>
    <div class="group">
      <button class="tb" aria-label="插件"><svg><use href="#slashes"/></svg></button>
    </div>
    <div class="group">
      <button class="tb" aria-label="复制坐标"><svg><use href="#pages"/></svg></button>
      <button class="tb" aria-label="图钉"><svg><use href="#pinmap"/></svg></button>
      <button class="tb" aria-label="定位"><svg><use href="#magdot"/></svg></button>
      <button class="tb" aria-label="多点定位"><svg><use href="#magdots"/></svg></button>
      <button class="tb" aria-label="范围"><svg><use href="#bbox"/></svg></button><button class="dd" aria-label="更多"></button>
      <button class="tb" aria-label="投影"><svg><use href="#dome"/></svg></button>
      <button class="tb" aria-label="坐标字段"><svg><use href="#gxy"/></svg></button>
      <button class="tb" aria-label="设置"><svg><use href="#wrench"/></svg></button>
    </div>
    <div class="group">
      <button class="tb" aria-label="添加底图"><svg><use href="#layerplus"/></svg></button><button class="dd" aria-label="更多"></button>
      <button class="tb" aria-label="底图设置"><svg><use href="#bluegear"/></svg></button>
      <button class="tb" aria-label="搜索地点"><svg><use href="#bluemag"/></svg></button>
      <button class="tb" aria-label="聚焦"><svg><use href="#gfocus"/></svg></button>
    </div>
  </div>

  <main class="workspace">
    <!-- Left docks -->
    <aside class="docks">
      <section class="dock">
        <h2>浏览器<button aria-label="浮动"><svg><use href="#float"/></svg></button><button aria-label="关闭"><svg><use href="#close"/></svg></button></h2>
        <div class="tools">
          <button aria-label="添加图层"><svg><use href="#p-add"/></svg></button>
          <button aria-label="刷新"><svg><use href="#refresh"/></svg></button>
          <button aria-label="过滤"><svg><use href="#p-filter"/></svg></button>
          <button aria-label="折叠"><svg><use href="#p-collapse"/></svg></button>
          <button aria-label="属性"><svg><use href="#p-info"/></svg></button>
        </div>
        <div class="tree">
          <ul>
            <li><b></b><svg><use href="#star"/></svg>收藏夹</li>
            <li><b class="tri"></b><svg><use href="#book"/></svg>空间书签</li>
            <li><b class="tri"></b><svg><use href="#home"/></svg>主目录</li>
            <li><b class="tri"></b><svg><use href="#folder"/></svg>C:\</li>
            <li><b class="tri"></b><svg><use href="#folder"/></svg>D:\ (新加卷)</li>
            <li class="hover"><b class="tri"></b><svg><use href="#folder"/></svg>X:\ (share)</li>
            <li><b class="tri"></b><svg><use href="#folder"/></svg>Z:\ (Public)</li>
            <li><b></b><svg><use href="#gpkg"/></svg>GeoPackage</li>
            <li><b></b><svg><use href="#feather"/></svg>SpatiaLite</li>
            <li><b></b><svg><use href="#elephant"/></svg>PostgreSQL</li>
            <li><b></b><svg><use href="#hana"/></svg>SAP HANA</li>
            <li><b></b><svg><use href="#stac"/></svg>STAC</li>
          </ul>
          <div class="vscroll"><i class="up"></i><i class="thumb"></i><i class="track"></i><i class="down"></i></div>
        </div>
        <div class="tabs">
          <button>图层顺序</button><button class="active">浏览器</button>
        </div>
      </section>
      <div class="split"></div>

      <section class="dock">
        <h2>空间书签管理器<button aria-label="浮动"><svg><use href="#float"/></svg></button><button aria-label="关闭"><svg><use href="#close"/></svg></button></h2>
        <div class="tools">
          <button aria-label="缩放到书签"><svg><use href="#bmzoom"/></svg></button>
          <button aria-label="添加书签"><svg><use href="#newbm"/></svg></button>
          <button aria-label="删除书签"><svg><use href="#trash"/></svg></button>
          <button aria-label="导入导出"><svg><use href="#share"/></svg></button>
        </div>
        <div class="marks">
          <table>
            <thead><tr><th class="c-name">名称</th><th class="c-val sort">组</th><th class="c-val">x最小值</th><th class="c-val">y最小值</th><th>x</th></tr></thead>
            <tbody>
              <tr><td><svg><use href="#bm"/></svg>丁师兄的范围</td><td></td><td>110.000000</td><td>12.000000</td><td>1</td></tr>
              <tr><td><svg><use href="#bm"/></svg>丁师兄的范围</td><td></td><td>110.000000</td><td>12.000000</td><td>1</td></tr>
              <tr><td><svg><use href="#bm"/></svg>段师兄范围_德国</td><td></td><td>6.465475</td><td>53.472777</td><td>8</td></tr>
              <tr><td><svg><use href="#bm"/></svg>段师兄范围_美国</td><td></td><td>-121.568870</td><td>34.888310</td><td>-</td></tr>
              <tr><td><svg><use href="#bm"/></svg>南海</td><td></td><td>114.000000</td><td>18.000000</td><td>1</td></tr>
              <tr><td><svg><use href="#bm"/></svg>lr-马鲁古</td><td></td><td>125.260066</td><td>-2.692157</td><td>1</td></tr>
              <tr><td><svg><use href="#bm"/></svg>zjl-龙目</td><td></td><td>113.645196</td><td>-11.327861</td><td>1</td></tr>
            </tbody>
          </table>
          <div class="hscroll"><i class="left"></i><i class="thumb"></i><i class="track"></i><i class="right"></i></div>
        </div>
      </section>
      <div class="split thin"></div>

      <section class="dock grow">
        <h2>图层<button aria-label="浮动"><svg><use href="#float"/></svg></button><button aria-label="关闭"><svg><use href="#close"/></svg></button></h2>
        <div class="tools">
          <button class="on" aria-label="图层样式"><svg><use href="#brush"/></svg></button>
          <button aria-label="添加组"><svg><use href="#group"/></svg></button>
          <button aria-label="可见性"><svg><use href="#eye"/></svg></button>
          <button aria-label="过滤图例"><svg><use href="#p-filterdd"/></svg></button>
          <button aria-label="表达式过滤"><svg><use href="#geps"/></svg></button><button class="dd off" aria-label="更多"></button>
          <button aria-label="展开"><svg><use href="#p-expand"/></svg></button>
          <button aria-label="折叠"><svg><use href="#p-collapse"/></svg></button>
          <button aria-label="移除"><svg><use href="#p-remove"/></svg></button>
        </div>
        <div class="layers">
          <label class="layer"><b class="tri open"></b><input type="checkbox" checked><svg><use href="#raster"/></svg><strong>20180803南海原始</strong></label>
          <p>波段 1 (灰度)</p>
          <div class="legend"><div class="bar"></div><div class="nums"><span>230</span><span>0</span></div></div>
        </div>
      </section>
    </aside>

    <!-- Map canvas -->
    <section class="canvas">
      <svg class="map" viewBox="0 0 1021 807" preserveAspectRatio="none">
        <defs>
          <linearGradient id="g-gray"><stop offset="0" stop-color="#111"/><stop offset="1" stop-color="#eee"/></linearGradient>
          <linearGradient id="g-blue" x2="1" y2="1"><stop offset="0" stop-color="#18a0e8"/><stop offset="1" stop-color="#0868c8"/></linearGradient>
          <linearGradient id="g-mesh" x2="1" y2="1"><stop offset="0" stop-color="#5f8fc4"/><stop offset="1" stop-color="#e4f0fa"/></linearGradient>
          <clipPath id="scene"><path d="M0 159L878 4l143 640L136 806z"/></clipPath>
          <filter id="sea" x="0" y="0" width="1" height="1" color-interpolation-filters="sRGB">
            <feTurbulence type="fractalNoise" baseFrequency=".9" numOctaves="3" seed="3"/>
            <feColorMatrix values="1.3 0 0 0 -.17 1.3 0 0 0 -.17 1.3 0 0 0 -.17 0 0 0 0 1"/>
            <feComposite in2="SourceGraphic" operator="in"/>
          </filter>
          <filter id="land" x="0" y="0" width="1" height="1" color-interpolation-filters="sRGB">
            <feTurbulence type="fractalNoise" baseFrequency=".8" numOctaves="3" seed="8"/>
            <feColorMatrix values="3.5 0 0 0 -.4 3.5 0 0 0 -.4 3.5 0 0 0 -.4 0 0 0 0 1"/>
            <feComposite in2="SourceGraphic" operator="in"/>
          </filter>
          <filter id="dark" x="0" y="0" width="1" height="1" color-interpolation-filters="sRGB">
            <feTurbulence type="fractalNoise" baseFrequency=".9" numOctaves="3" seed="5"/>
            <feColorMatrix values=".4 0 0 0 -.07 .4 0 0 0 -.07 .4 0 0 0 -.07 0 0 0 0 1"/>
            <feComposite in2="SourceGraphic" operator="in"/>
          </filter>
          <filter id="soft"><feGaussianBlur stdDeviation="5"/></filter>
        </defs>
        <rect width="1021" height="807"/>
        <g clip-path="url(#scene)">
          <path d="M0 120h240v687H0z" filter="url(#sea)"/>
          <path d="M300 0h721v120H300z" filter="url(#dark)"/>
          <path d="M0 120h44l3 30 7 14-1 7 6 6-2 10-2 7-7 8-8 5-2 6-3 7-8 5-7 10-14 8H0z" filter="url(#land)"/>
          <path d="M30 345h10l27 2 7-7 1-8 2-12 8-4 7-2 12 1 6-11 7-10 2 6 5 10 10 20v245l-12-4-8 5-2 10 4 12-6 6-11 5-3 20H30z" filter="url(#land)"/>
          <path d="M82 343l8 20 5 24-7 3-9-34z" fill="#777" opacity=".8"/>
          <path d="M44 290l30 4 14 6-16 12-6 26-20 0z" filter="url(#soft)" opacity=".3"/>
          <path d="M92 431l4-2 2 4-5 2zM112 453l6-2-2 6-5 1zM81 458l3-2 1 5-3 2zM82 535l8-1-3 3zM74 219l8-5-3 6-6 3z" fill="#222" opacity=".6"/>
        </g>
      </svg>
    </section>

    <!-- Layer styling dock -->
    <aside class="styling">
      <h2>图层样式</h2>
      <label class="combo"><svg><use href="#raster"/></svg><select aria-label="图层"><option>20180803南海原始</option></select></label>
      <div class="line"><svg class="i24"><use href="#brush"/></svg><label class="combo"><svg><use href="#ramp"/></svg><select aria-label="渲染器"><option>单波段灰度</option></select></label></div>
      <div class="line band"><button class="sidetab" aria-label="符号化"><svg><use href="#anncode"/></svg></button><label for="band">灰度波段</label><select id="band"><option>波段 1 (灰度)</option></select></div>
      <div class="undo"><i></i><button aria-label="撤销"></button><button aria-label="重做"></button></div>
      <div class="tabs"><button>工具箱</button><button class="active">图层样式</button></div>
    </aside>
  </main>

  <footer class="statusbar">
    <label class="locator"><svg><use href="#search"/></svg><input type="text" placeholder="搜索 (Ctrl+K)" aria-label="搜索"></label>
    <div class="status">
      <label for="coord">坐标</label><input id="coord" class="w-coord" type="text" value="20.603° , 112.313°">
      <svg><use href="#satellite"/></svg>
      <label for="scale">比例</label><span class="pick"><select id="scale"><option>1:881876</option></select><i></i></span>
      <svg><use href="#lock"/></svg>
      <label for="magn">放大镜</label><span class="spin"><input id="magn" type="text" value="100%"><i></i></span>
      <label for="rot">旋转角度</label><span class="spin"><input id="rot" type="text" value="0.0°"><i></i></span>
      <label class="render"><input type="checkbox" checked>渲染</label>
      <svg><use href="#dome"/></svg>
    </div>
  </footer>

  <!-- File search window -->
  <div class="window">
    <header><svg><use href="#evt"/></svg>.tif - Everything</header>
    <nav>
      <a href="#">文件(<u>F</u>)</a><a href="#">编辑(<u>E</u>)</a><a href="#">视图(<u>V</u>)</a><a href="#">搜索(<u>S</u>)</a><a href="#">书签(<u>B</u>)</a><a href="#">工具(<u>T</u>)</a><a href="#">帮助(<u>H</u>)</a>
    </nav>
    <div class="query"><input type="text" value=".tif" aria-label="搜索"></div>
    <div class="results">
      <div class="listing">
        <table>
          <thead><tr><th>名称</th><th class="path">路径</th></tr></thead>
          <tbody>
            <tr><td><svg><use href="#f-tif"/></svg><span>20240722Sulusea_original<b>.tif</b></span></td><td>C:\Users\Locker\Desktop\小论文\Qgis工程</td></tr>
            <tr><td><svg><use href="#f-tif"/></svg><span>20240212Celebesea_original<b>.tif</b></span></td><td>C:\Users\Locker\Desktop\小论文\Qgis工程</td></tr>
            <tr><td><svg><use href="#f-xml"/></svg><span>20170810SCS_original<b>.tif</b>.aux.xml</span></td><td>C:\Users\Locker\Desktop\小论文\Qgis工程</td></tr>
            <tr><td><svg><use href="#f-xml"/></svg><span>20190109Andamansea_original<b>.tif</b>.aux.xml</span></td><td>C:\Users\Locker\Desktop\小论文\Qgis工程</td></tr>
            <tr><td><svg><use href="#f-tif"/></svg><span>20170810SCS_original<b>.tif</b></span></td><td>C:\Users\Locker\Desktop\小论文\Qgis工程</td></tr>
            <tr><td><svg><use href="#f-tif"/></svg><span>20190109Andamansea_original<b>.tif</b></span></td><td>C:\Users\Locker\Desktop\小论文\Qgis工程</td></tr>
            <tr class="selected"><td><svg><use href="#f-tif"/></svg><span>20180803南海原始<b>.tif</b></span></td><td>C:\Users\Locker\Desktop\小论文\Qgis工程</td></tr>
            <tr><td><svg><use href="#f-tif"/></svg><span>S1A-IW-GRD-VV-20170810T102457-20170810T102526-017860-01DF17-001_QL_已修改<b>.tif</b></span></td><td>C:\Users\Locker\Desktop\小论文\Qgis工程</td></tr>
            <tr><td><svg><use href="#f-xml"/></svg><span>S1A-IW-GRD-VV-20170810T102457-20170810T102526-017860-01DF17-001_QL_已修改<b>.tif</b>.aux.xml</span></td><td>C:\Users\Locker\Desktop\小论文\Qgis工程</td></tr>
            <tr><td><svg><use href="#f-tif"/></svg><span>S1A-IW-GRD-VV-20170810T102457-20170810T102526-017860-01DF17-001_QL_已修改<b>.tif</b></span></td><td>D:\LR\学术论文\研究区域</td></tr>
            <tr><td><svg><use href="#f-xml"/></svg><span>标签图2_已修改<b>.tif</b>.aux.xml</span></td><td>D:\LR\修改文件夹\需要修改</td></tr>
            <tr><td><svg><use href="#f-xml"/></svg><span>标签图3<b>.tif</b>.aux.xml</span></td><td>D:\LR\修改文件夹\需要修改</td></tr>
            <tr><td><svg><use href="#f-tif"/></svg><span>标签图3<b>.tif</b></span></td><td>D:\LR\修改文件夹\需要修改</td></tr>
            <tr><td><svg><use href="#f-tif"/></svg><span>标签图2_已修改<b>.tif</b></span></td><td>D:\LR\修改文件夹\需要修改</td></tr>
            <tr><td><svg><use href="#f-tif"/></svg><span>0000<b>.tif</b></span></td><td>D:\BIAOZHU</td></tr>
            <tr><td><svg><use href="#f-tif"/></svg><span>za_cdngi_sageoid2010<b>.tif</b></span></td><td>C:\Program Files\QGIS 3.44.1\share\proj</td></tr>
            <tr><td><svg><use href="#f-tif"/></svg><span>us_noaa_wyhpgn<b>.tif</b></span></td><td>C:\Program Files\QGIS 3.44.1\share\proj</td></tr>
            <tr><td><svg><use href="#f-tif"/></svg><span>us_noaa_wvhpgn<b>.tif</b></span></td><td>C:\Program Files\QGIS 3.44.1\share\proj</td></tr>
            <tr><td><svg><use href="#f-tif"/></svg><span>us_noaa_wthpgn<b>.tif</b></span></td><td>C:\Program Files\QGIS 3.44.1\share\proj</td></tr>
            <tr><td><svg><use href="#f-tif"/></svg><span>us_noaa_wshpgn<b>.tif</b></span></td><td>C:\Program Files\QGIS 3.44.1\share\proj</td></tr>
            <tr><td><svg><use href="#f-tif"/></svg><span>us_noaa_wohpgn<b>.tif</b></span></td><td>C:\Program Files\QGIS 3.44.1\share\proj</td></tr>
            <tr><td><svg><use href="#f-tif"/></svg><span>us_noaa_WO<b>.tif</b></span></td><td>C:\Program Files\QGIS 3.44.1\share\proj</td></tr>
            <tr><td><svg><use href="#f-tif"/></svg><span>us_noaa_wmhpgn<b>.tif</b></span></td><td>C:\Program Files\QGIS 3.44.1\share\proj</td></tr>
            <tr><td><svg><use href="#f-tif"/></svg><span>us_noaa_wihpgn<b>.tif</b></span></td><td>C:\Program Files\QGIS 3.44.1\share\proj</td></tr>
            <tr><td><svg><use href="#f-tif"/></svg><span>us_noaa_WI<b>.tif</b></span></td><td>C:\Program Files\QGIS 3.44.1\share\proj</td></tr>
            <tr><td><svg><use href="#f-tif"/></svg><span>us_noaa_vertconw<b>.tif</b></span></td><td>C:\Program Files\QGIS 3.44.1\share\proj</td></tr>
            <tr><td><svg><use href="#f-tif"/></svg><span>us_noaa_vertcone<b>.tif</b></span></td><td>C:\Program Files\QGIS 3.44.1\share\proj</td></tr>
            <tr><td><svg><use href="#f-tif"/></svg></td><td></td></tr>
          </tbody>
        </table>
        <div class="wv"><svg viewBox="0 0 10 6"><path d="M1 5l4-4 4 4"/></svg><i></i><svg viewBox="0 0 10 6"><path d="M1 1l4 4 4-4"/></svg></div>
        <div class="wh"><svg viewBox="0 0 6 10"><path d="M5 1L1 5l4 4"/></svg><i></i><svg viewBox="0 0 6 10"><path d="M1 1l4 4-4 4"/></svg></div>
      </div>
      <div class="preview"><div class="thumbnail"></div></div>
    </div>
    <footer>大小: 503 MB, 修改时间: 2025/7/7 10:21, 创建时间: 2025/7/7 10:19, 路径: C:\Users\Locker\Desktop\小论文\Qgis工程</footer>
  </div>

  <!-- Red marker and arrow -->
  <svg class="marks-over" width="830" height="810" aria-hidden="true">
    <rect x="655" y="480" width="166" height="35"/>
    <path d="M646 502L180 796M186 779l-8 18 20 1"/>
  </svg>
</body>
</html>
```
FILE: styles.css
```css
* {
  box-sizing: border-box;
}

body {
  margin: 0;
  height: 100vh;
  display: flex;
  flex-direction: column;
  overflow: hidden;
  background: #efefef;
  color: #000;
  font-family: "Noto Sans", "Noto Sans CJK SC", sans-serif;
  font-size: 12px;
  line-height: 18px;
}

a {
  color: inherit;
  text-decoration: none;
}

button {
  margin: 0;
  padding: 0;
  border: 0;
  background: none;
  color: inherit;
  font: inherit;
}

input,
select {
  margin: 0;
  padding: 0 4px;
  border: 1px solid #b4b4b4;
  border-radius: 2px;
  background: #fff;
  color: #000;
  font: inherit;
  appearance: none;
}

.sprite {
  display: none;
}

/* Title and menu */
.titlebar {
  flex: none;
  display: flex;
  align-items: center;
  gap: 5px;
  height: 23px;
  background: #fff;
  color: #999;
}

.i16 {
  width: 16px;
  height: 16px;
}

.menubar {
  flex: none;
  display: flex;
  gap: 15px;
  height: 22px;
  padding: 2px 8px;
  border-bottom: 1px solid #d4d4d4;
  color: #999;
}

/* Toolbars */
.toolbar {
  flex: none;
  display: flex;
  gap: 7px;
  height: 39px;
  border-bottom: 1px solid #b4b4b4;
  background: linear-gradient(#f9f9f9, #eee);
}

.toolbar.last {
  height: 37px;
  border-bottom: 0;
}

.group {
  display: flex;
  align-items: center;
}

.group::before {
  content: "";
  width: 5px;
  height: 18px;
  margin: 0 2px;
  background: radial-gradient(circle, #aaa 30%, transparent 40%) 0 0 / 3px 3px;
}

.tb {
  width: 33px;
  height: 31px;
  display: flex;
  align-items: center;
  justify-content: center;
  border: 1px solid transparent;
  border-radius: 3px;
}

.tb.on,
.tools .on {
  border: 1px solid #aaa;
  background: #dcdcdc;
  border-radius: 3px;
}

.tb svg,
.i24 {
  flex: none;
  width: 24px;
  height: 24px;
}

.dd {
  width: 12px;
  height: 24px;
  display: flex;
  align-items: center;
  justify-content: center;
}

.dd::after {
  content: "";
  border: 4px solid transparent;
  border-top-color: #444;
  border-bottom: 0;
}

.dd.off::after {
  border-top-color: #999;
}

.sep {
  width: 2px;
  height: 20px;
  margin: 0 2px 0 3px;
  background: #ccc;
  border-right: 1px solid #fff;
}

/* Workspace */
.workspace {
  flex: 1;
  min-height: 0;
  display: flex;
  border-top: 1px solid #b4b4b4;
}

.docks {
  flex: none;
  width: 454px;
  display: flex;
  flex-direction: column;
}

.dock h2,
.styling h2 {
  display: flex;
  align-items: center;
  gap: 2px;
  height: 21px;
  margin: 0;
  padding: 0 1px;
  font-size: 12px;
  font-weight: normal;
}

.dock h2 button:first-of-type {
  margin-left: auto;
}

.dock h2 svg {
  display: block;
  width: 12px;
  height: 12px;
}

.tools {
  display: flex;
  align-items: center;
  height: 30px;
  padding-bottom: 2px;
}

.tools button {
  width: 25px;
  height: 23px;
  display: flex;
  align-items: center;
  justify-content: center;
}

.tools svg {
  width: 16px;
  height: 16px;
}

.tools .dd {
  width: 12px;
}

.tree,
.marks,
.layers {
  border: 1px solid #b4b4b4;
  border-left: 0;
  background: #fff;
  overflow: hidden;
}

.tree {
  display: flex;
  height: 227px;
}

.tree ul {
  flex: 1;
  margin: 0;
  padding: 0;
  list-style: none;
}

.tree li {
  display: flex;
  align-items: center;
  gap: 6px;
  width: 167px;
  height: 19px;
  padding-left: 3px;
}

.tree li b {
  width: 8px;
}

.tree li svg {
  flex: none;
  width: 16px;
  height: 16px;
}

.tree .hover {
  background: #efefef;
}

.tri::before {
  content: "";
  display: block;
  width: 0;
  border: 4px solid transparent;
  border-left-color: #555;
  border-right: 0;
}

.tri.open::before {
  border: 4px solid transparent;
  border-top-color: #555;
  border-bottom: 0;
}

.vscroll {
  display: flex;
  flex-direction: column;
  width: 14px;
  border-left: 1px solid #b4b4b4;
}

.vscroll i,
.hscroll i {
  display: flex;
  align-items: center;
  justify-content: center;
}

.vscroll .up,
.vscroll .down {
  height: 14px;
}

.vscroll .thumb {
  height: 95px;
  border: 1px solid #b4b4b4;
  border-width: 1px 0;
}

.track {
  flex: 1;
  background: #e4e4e4;
}

.vscroll .track {
  border-bottom: 1px solid #b4b4b4;
}

.up::after,
.down::after,
.left::after,
.right::after {
  content: "";
  border: 4px solid transparent;
}

.up::after {
  border-bottom-color: #555;
  border-top: 0;
}

.down::after {
  border-top-color: #555;
  border-bottom: 0;
}

.left::after {
  border-right-color: #555;
  border-left: 0;
}

.right::after {
  border-left-color: #555;
  border-right: 0;
}

.tabs {
  display: flex;
  align-items: flex-start;
  height: 25px;
  margin-top: 1px;
  border-top: 1px solid #b4b4b4;
  font-size: 15px;
}

.tabs button {
  height: 22px;
  padding: 0 10px;
  border: 1px solid #b4b4b4;
  border-top: 0;
  background: #dcdcdc;
  line-height: 20px;
}

.tabs button:first-child {
  border-left: 0;
}

.tabs .active {
  height: 24px;
  padding: 0 11px;
  border-left: 0;
  border-radius: 0 0 3px 3px;
  background: #f8f8f8;
}

.split {
  flex: none;
  width: 17px;
  height: 6px;
  margin: 0 auto;
  background: radial-gradient(circle, #aaa 30%, transparent 40%) 0 1px / 3px 3px repeat-x;
}

.split.thin {
  height: 5px;
}

/* Bookmarks */
.marks {
  display: flex;
  flex-direction: column;
  height: 209px;
}

.marks table {
  width: 100%;
  table-layout: fixed;
  border-collapse: separate;
  border-spacing: 0;
}

.marks th {
  height: 21px;
  padding: 0 2px;
  border-right: 1px solid #c4c4c4;
  border-bottom: 1px solid #b4b4b4;
  background: linear-gradient(#fafafa, #ececec);
  font-weight: normal;
  text-align: left;
  white-space: nowrap;
  overflow: hidden;
}

.marks th:first-child {
  padding-left: 0;
}

.marks th:last-child {
  border-right: 0;
}

.c-name {
  width: 144px;
}

.c-val {
  width: 100px;
}

.sort::after {
  content: "";
  float: right;
  margin: 6px 3px;
  border: 4px solid transparent;
  border-top-color: #555;
  border-bottom: 0;
}

.marks td {
  height: 19px;
  padding: 0 3px;
  white-space: nowrap;
  overflow: hidden;
}

.marks td:first-child {
  padding-left: 1px;
}

.marks td svg {
  width: 16px;
  height: 16px;
  margin-right: 6px;
  vertical-align: middle;
}

.marks tr:nth-child(even) td {
  background: #e8e6e2;
}

.hscroll {
  display: flex;
  height: 14px;
  margin-top: auto;
  border-top: 1px solid #b4b4b4;
}

.hscroll .left,
.hscroll .right {
  width: 12px;
}

.hscroll .thumb {
  width: 207px;
  border: 1px solid #b4b4b4;
  border-width: 0 1px;
}

.hscroll .track {
  border-right: 1px solid #b4b4b4;
}

/* Layers */
.grow {
  flex: 1;
  min-height: 0;
  display: flex;
  flex-direction: column;
}

.grow h2,
.grow .tools {
  flex: none;
}

.layers {
  flex: 1;
}

.layer {
  display: flex;
  align-items: center;
  gap: 8px;
  height: 19px;
  padding-left: 4px;
}

.layer strong {
  font-weight: bold;
  text-decoration: underline;
}

.layer svg {
  flex: none;
  width: 14px;
  height: 14px;
}

input[type="checkbox"] {
  display: flex;
  align-items: center;
  justify-content: center;
  width: 14px;
  height: 14px;
  padding: 0;
  border-color: #999;
}

input[type="checkbox"]:checked::before {
  content: "";
  width: 4px;
  height: 8px;
  border: solid #000;
  border-width: 0 2px 2px 0;
  transform: rotate(40deg);
}

.layers p {
  margin: 0;
  padding-left: 41px;
}

.legend {
  display: flex;
  gap: 7px;
  padding-left: 41px;
  font: 15px/16px "Liberation Serif", serif;
}

.bar {
  width: 16px;
  height: 96px;
  background: linear-gradient(#fff, #000);
}

.nums {
  display: flex;
  flex-direction: column;
  justify-content: space-between;
}

/* Map */
.canvas {
  flex: 1;
  margin: 1px 0 0 6px;
  padding: 20px 52px;
  border: 1px solid #b4b4b4;
  background: #fff;
}

.map {
  display: block;
  width: 100%;
  height: 100%;
}

/* Layer styling */
.styling {
  flex: none;
  width: 207px;
  display: flex;
  flex-direction: column;
  padding-left: 6px;
  overflow: hidden;
  font-size: 15px;
}

.styling h2 {
  padding-left: 4px;
}

.styling select {
  font-family: "Liberation Serif", "Noto Sans CJK SC", serif;
  white-space: nowrap;
}

.combo {
  flex: none;
  display: flex;
  align-items: center;
  gap: 4px;
  width: 240px;
  height: 24px;
  margin: 2px 3px 0;
  padding-left: 7px;
  border: 1px solid #b4b4b4;
  border-radius: 3px;
  background: linear-gradient(#fefefe, #f0f0f0);
}

.combo select {
  padding: 0;
  border: 0;
  background: none;
}

.combo svg {
  width: 14px;
  height: 14px;
}

.line {
  display: flex;
  align-items: center;
  gap: 8px;
  margin-top: 10px;
  padding-left: 9px;
}

.line.band {
  align-items: flex-start;
  gap: 4px;
  margin-top: 3px;
  padding-left: 3px;
  white-space: nowrap;
}

.band label,
.band select {
  flex: none;
  margin-top: 4px;
}

.band select {
  width: 160px;
  height: 24px;
}

.sidetab {
  flex: none;
  width: 38px;
  height: 36px;
  background: #555;
}

.sidetab svg {
  width: 24px;
  height: 24px;
}

.undo {
  display: flex;
  gap: 5px;
  height: 26px;
  margin: auto 0 3px 3px;
}

.undo i {
  width: 38px;
  background: #555;
}

.undo button {
  width: 24px;
  border: 1px solid #b4b4b4;
  border-radius: 3px;
}

.styling .tabs {
  height: 26px;
}

.styling .tabs button:first-child {
  padding: 0 12px;
  border-left: 1px solid #b4b4b4;
}

/* Status bar */
.statusbar {
  flex: none;
  display: flex;
  justify-content: space-between;
  height: 24px;
  padding: 3px 0 0 1px;
  overflow: hidden;
}

.locator {
  display: flex;
  align-items: center;
  gap: 4px;
  width: 200px;
  height: 24px;
  padding-left: 7px;
  border: 1px solid #b4b4b4;
  border-radius: 3px;
  background: #fff;
}

.locator svg,
.status svg {
  width: 14px;
  height: 14px;
}

.locator input {
  width: 160px;
  padding: 0 2px;
  border: 0;
  font: 14px/20px "Liberation Mono", "Noto Sans CJK SC", monospace;
}

.locator input::placeholder {
  color: #777;
}

.status {
  display: flex;
  align-items: center;
  gap: 4px;
  height: 24px;
  font-size: 13px;
}

.status input[type="text"],
.status select {
  height: 24px;
  font: 12px/20px "Liberation Mono", monospace;
}

.status > svg {
  margin: 0 5px;
}

.status > svg:last-child {
  margin: 0 -2px 0 11px;
}

.w-coord {
  width: 140px;
}

.spin,
.pick {
  display: flex;
  width: 101px;
}

.spin {
  margin-right: 6px;
}

.spin input,
.pick select {
  flex: 1;
  min-width: 0;
}

.spin i,
.pick i {
  width: 14px;
  border: 1px solid #b4b4b4;
  border-left: 0;
  background: #f6f6f6;
  display: flex;
  flex-direction: column;
  align-items: center;
  justify-content: center;
  gap: 4px;
}

.pick i {
  width: 20px;
}

.spin i::before,
.spin i::after,
.pick i::after {
  content: "";
  border: 4px solid transparent;
}

.spin i::before {
  border-bottom-color: #555;
  border-top: 0;
}

.spin i::after,
.pick i::after {
  border-top-color: #555;
  border-bottom: 0;
}

.render {
  display: flex;
  align-items: center;
  gap: 5px;
}

/* Search window */
.window {
  position: absolute;
  left: 647px;
  right: 0;
  top: 260px;
  height: 717px;
  display: flex;
  flex-direction: column;
  border-bottom: 1px solid #555;
  border-left: 1px solid #555;
  background: #fff;
  box-shadow: 0 6px 20px rgba(0, 0, 0, .4);
}

.window header {
  display: flex;
  align-items: center;
  gap: 5px;
  height: 29px;
  padding-left: 7px;
}

.window header svg,
.window td svg {
  width: 16px;
  height: 16px;
}

.window nav {
  display: flex;
  gap: 15px;
  height: 21px;
  padding: 2px 7px 0;
  border-bottom: 2px solid #f0f0f0;
  line-height: 17px;
}

.query {
  padding: 2px 3px 3px;
  border-bottom: 1px solid #ddd;
}

.query input {
  display: block;
  width: calc(100% + 4px);
  height: 21px;
  padding: 0 2px;
  border-radius: 0;
}

.results {
  flex: 1;
  min-height: 0;
  display: flex;
}

.listing {
  flex: 1;
  min-width: 0;
  display: grid;
  grid-template-columns: 1fr 16px;
  grid-template-rows: 597px 16px;
  overflow: hidden;
}

.listing table {
  width: 100%;
  height: 0;
  border-collapse: collapse;
  table-layout: fixed;
}

.listing th {
  height: 24px;
  padding: 2px 6px 0;
  font-weight: normal;
  text-align: left;
}

.listing .path {
  width: 274px;
  border-left: 1px solid #e4e4e4;
}

.listing td {
  height: 21px;
  padding: 0 6px;
  white-space: nowrap;
  line-height: 17px;
}

.listing td:first-child {
  padding-left: 4px;
}

.window td svg {
  vertical-align: middle;
}

.listing td span {
  display: inline-block;
  padding: 1px;
  border: 1px solid transparent;
  vertical-align: middle;
}

.listing .selected td span {
  padding-right: 5px;
  background: #0078d7;
  border: 1px dotted #ff8728;
  color: #fff;
}

.wv,
.wh {
  display: flex;
  align-items: center;
  background: #f0f0f0;
}

.wv {
  flex-direction: column;
  padding: 6px 0;
}

.wv i {
  width: 15px;
  height: 17px;
  margin-top: 61px;
  background: #cdcdcd;
}

.wv svg {
  width: 10px;
  height: 6px;
}

.wv svg:last-child {
  margin-top: auto;
}

.wv path,
.wh path {
  fill: none;
  stroke: #555;
  stroke-width: 2;
}

.wh {
  grid-column: 1 / 3;
  gap: 6px;
  padding: 0 22px 0 5px;
}

.wh svg {
  width: 6px;
  height: 10px;
}

.wh i {
  width: 65%;
  height: 15px;
  background: #cdcdcd;
}

.wh svg:last-child {
  margin-left: auto;
}

.preview {
  width: 32px;
  display: flex;
  align-items: center;
  padding-left: 6px;
  border-left: 1px solid #a0a0a0;
  background: linear-gradient(to right, #f0f0f0 4px, #a0a0a0 4px, #a0a0a0 5px, #fff 5px);
}

.thumbnail {
  width: 100%;
  height: 149px;
  background: #000;
}

.window footer {
  height: 26px;
  padding: 4px 2px;
  border-top: 1px solid #d4d4d4;
  background: #f0f0f0;
  font-family: "Liberation Sans", "Noto Sans CJK SC", sans-serif;
}

/* Overlay marks */
.marks-over {
  position: absolute;
  left: 0;
  top: 0;
  fill: none;
  stroke: #ed1c24;
  stroke-width: 6;
  pointer-events: none;
}
```
